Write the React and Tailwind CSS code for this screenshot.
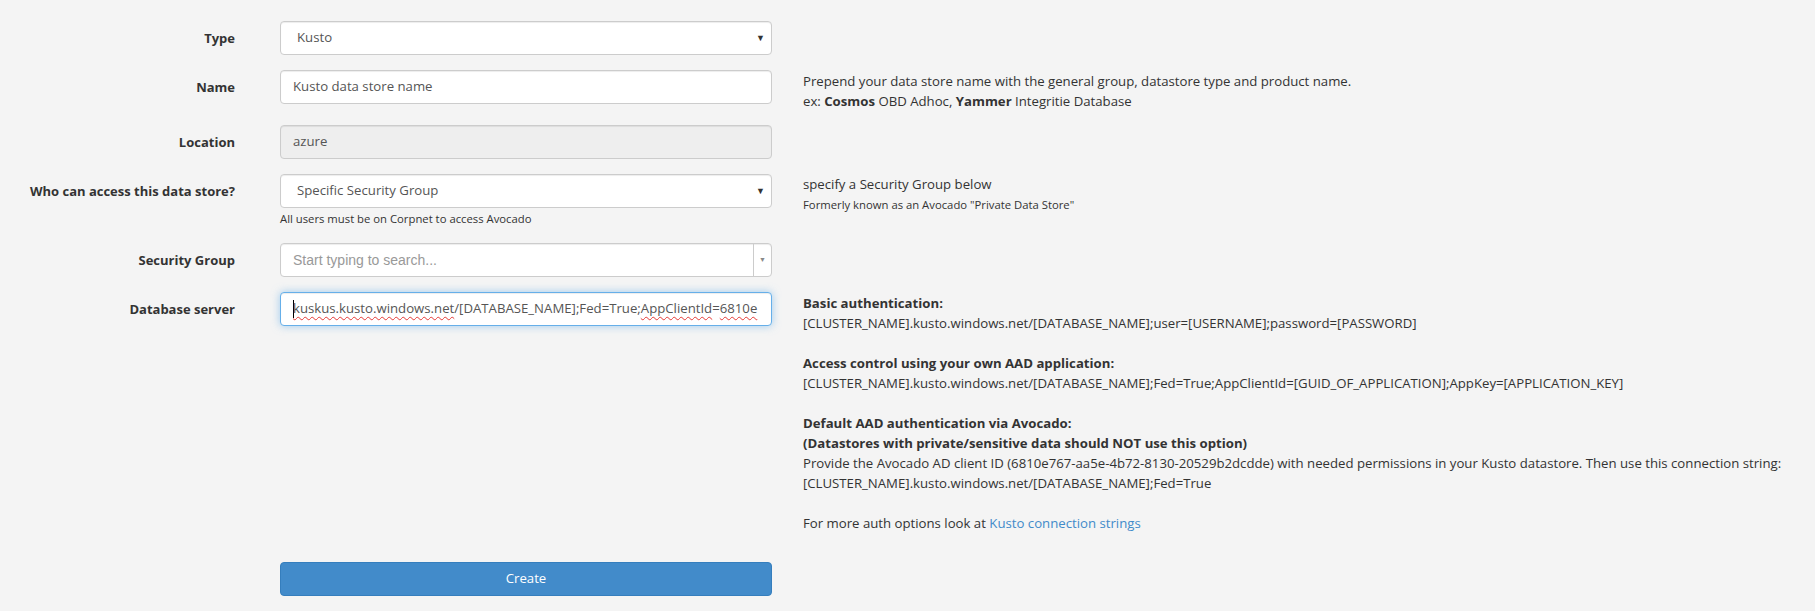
import React from 'react';

const font = "font-['Open_Sans',sans-serif]";

const Row = ({ label, help, helpClass = 'pt-px', className = '', children }) => (
  <div className={`flex ${className}`}>
    <div className="w-[235px] shrink-0 pt-[7px] text-right text-[13px] font-bold leading-5 text-[#333]">
      {label}
    </div>
    <div className="ml-[45px] w-[492px] shrink-0">{children}</div>
    <div className={`ml-[31px] text-[13.2px] leading-5 text-[#333] ${helpClass}`}>{help}</div>
  </div>
);

const FakeSelect = ({ value }) => (
  <div className="flex h-[34px] items-center justify-between rounded-[4px] border border-[#ccc] bg-white pl-4 pr-[6px] text-[13.2px] text-[#555] shadow-[inset_0_1px_1px_rgba(0,0,0,0.075)]">
    <span>{value}</span>
    <span className="text-[9px] text-[#333]">▼</span>
  </div>
);

const Squiggle = ({ children }) => (
  <span className="underline decoration-wavy decoration-[#e53935] decoration-1 underline-offset-[3px]">
    {children}
  </span>
);

export default function App() {
  return (
    <div className={`min-h-screen w-full bg-[#f4f4f4] pt-[21px] ${font}`}>
      <Row label="Type" className="mb-[15px]">
        <FakeSelect value="Kusto" />
      </Row>

      <Row
        label="Name"
        className="mb-[14px]"
        help={
          <>
            <div>Prepend your data store name with the general group, datastore type and product name.</div>
            <div>
              ex: <b>Cosmos</b> OBD Adhoc, <b>Yammer</b> Integritie Database
            </div>
          </>
        }
      >
        <div className="flex h-[34px] items-center rounded-[4px] border border-[#ccc] bg-white px-3 text-[13.2px] text-[#555] shadow-[inset_0_1px_1px_rgba(0,0,0,0.075)]">
          Kusto data store name
        </div>
      </Row>

      <Row label="Location" className="mb-[15px]">
        <div className="flex h-[34px] items-center rounded-[4px] border border-[#ccc] bg-[#eee] px-3 text-[13.2px] text-[#555] shadow-[inset_0_1px_1px_rgba(0,0,0,0.075)]">
          azure
        </div>
      </Row>

      <Row
        label="Who can access this data store?"
        className="mb-[16px]"
        helpClass="pt-0"
        help={
          <>
            <div>specify a Security Group below</div>
            <div className="mt-[2px] text-[11.3px] leading-[18px]">Formerly known as an Avocado "Private Data Store"</div>
          </>
        }
      >
        <FakeSelect value="Specific Security Group" />
        <div className="mt-[3px] text-[11.3px] leading-4 text-[#333]">All users must be on Corpnet to access Avocado</div>
      </Row>

      <Row label="Security Group" className="mb-[15px]">
        <div className="flex h-[34px] items-stretch rounded-[4px] border border-[#ccc] bg-white shadow-[inset_0_1px_1px_rgba(0,0,0,0.075)]">
          <div className="flex flex-1 items-center px-3 font-['Liberation_Sans',sans-serif] text-[14px] text-[#999]">
            Start typing to search...
          </div>
          <div className="flex w-[18px] items-center justify-center border-l border-[#ccc] text-[7px] text-[#888]">▼</div>
        </div>
      </Row>

      <Row
        label="Database server"
        help={
          <>
            <div className="font-bold">Basic authentication:</div>
            <div>[CLUSTER_NAME].kusto.windows.net/[DATABASE_NAME];user=[USERNAME];password=[PASSWORD]</div>
            <div className="h-5" />
            <div className="font-bold">Access control using your own AAD application:</div>
            <div>[CLUSTER_NAME].kusto.windows.net/[DATABASE_NAME];Fed=True;AppClientId=[GUID_OF_APPLICATION];AppKey=[APPLICATION_KEY]</div>
            <div className="h-5" />
            <div className="font-bold">Default AAD authentication via Avocado:</div>
            <div className="font-bold">(Datastores with private/sensitive data should NOT use this option)</div>
            <div className="whitespace-nowrap">
              Provide the Avocado AD client ID (6810e767-aa5e-4b72-8130-20529b2dcdde) with needed permissions in your Kusto datastore. Then use this connection string:
            </div>
            <div>[CLUSTER_NAME].kusto.windows.net/[DATABASE_NAME];Fed=True</div>
            <div className="h-5" />
            <div>
              For more auth options look at <a className="text-[#428bca]">Kusto connection strings</a>
            </div>
          </>
        }
      >
        <div className="flex h-[34px] items-center overflow-hidden whitespace-nowrap rounded-[4px] border border-[#66afe9] bg-white px-3 text-[13.2px] text-[#555] shadow-[inset_0_1px_1px_rgba(0,0,0,0.075),0_0_8px_rgba(102,175,233,0.6)]">
          <span className="mr-[-1px] h-[18px] w-px bg-black" />
          <Squiggle>kuskus.kusto.windows.net</Squiggle>
          /[DATABASE_NAME];Fed=True;<Squiggle>AppClientId</Squiggle>=<Squiggle>6810e</Squiggle>
        </div>
      </Row>

      <div className="ml-[280px] mt-[29px] w-[492px] pb-4">
        <button className="h-[34px] w-full rounded-[4px] border border-[#357ebd] bg-[#428bca] text-[13.2px] text-white">
          Create
        </button>
      </div>
    </div>
  );
}
